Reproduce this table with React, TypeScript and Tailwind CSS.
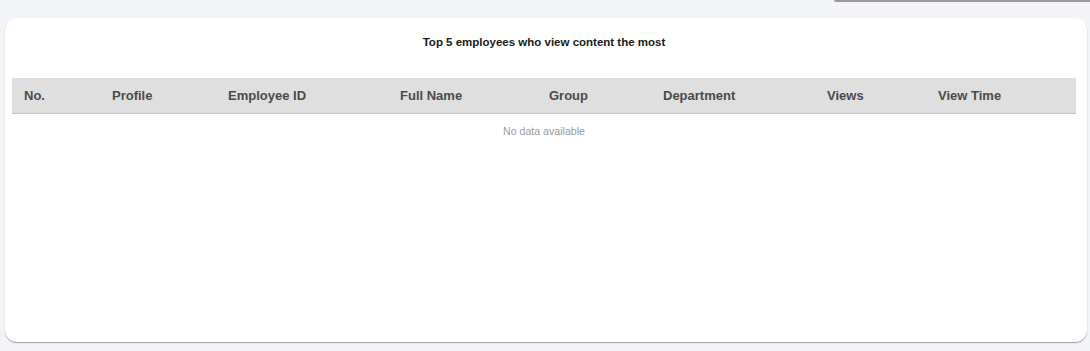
const columns = [
  { label: "No.", width: "w-[88px]" },
  { label: "Profile", width: "w-[116px]" },
  { label: "Employee ID", width: "w-[172px]" },
  { label: "Full Name", width: "w-[149px]" },
  { label: "Group", width: "w-[114px]" },
  { label: "Department", width: "w-[164px]" },
  { label: "Views", width: "w-[111px]" },
  { label: "View Time", width: "w-[150px]" },
];

export default function App() {
  return (
    <div className="h-[351px] w-full bg-[#f3f4f8] font-['Liberation_Sans',Arial,sans-serif] overflow-hidden">
      <div className="flex justify-end">
        <div className="h-[2px] w-[256px] rounded-bl-[2px] bg-[#9a9a9a]" />
      </div>
      <div className="ml-[5px] mr-[3px] mt-[16px] h-[324px] rounded-[12px] bg-white shadow-[0_1px_1px_rgba(0,0,0,0.35)] pl-[7px] pr-[11px] pt-[18px]">
        <h2 className="text-center text-[11.5px] leading-[13px] font-bold text-[#1a1a1a]">
          Top 5 employees who view content the most
        </h2>
        <table className="mt-[29px] w-[1064px] table-fixed border-collapse">
          <thead>
            <tr className="h-[35px] bg-[#dfdfdf] border-b border-[#c6c6c6]">
              {columns.map((c) => (
                <th
                  key={c.label}
                  className={`${c.width} px-3 text-left text-[13px] font-bold text-[#4a4a4a]`}
                >
                  {c.label}
                </th>
              ))}
            </tr>
          </thead>
          <tbody>
            <tr>
              <td
                colSpan={8}
                className="pt-[11px] text-center text-[10.6px] leading-[13px] text-[#9a9a9a]"
              >
                No data available
              </td>
            </tr>
          </tbody>
        </table>
      </div>
    </div>
  );
}
